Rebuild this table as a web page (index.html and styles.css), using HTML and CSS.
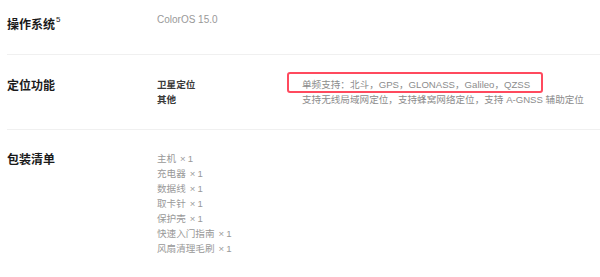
FILE: index.html
```html
<!DOCTYPE html>
<html lang="zh-CN">
<head>
<meta charset="utf-8">
<link rel="stylesheet" href="styles.css">
</head>
<body>
<div class="specs">
  <div class="row row-first">
    <div class="label">操作系统<sup class="sup">5</sup></div>
    <div class="value wide os">ColorOS 15.0</div>
  </div>
  <div class="row">
    <div class="label">定位功能</div>
    <div class="sub">
      <div class="line">卫星定位</div>
      <div class="line">其他</div>
    </div>
    <div class="value">
      <div class="line hl-line">单频支持：北斗，GPS，GLONASS，Galileo，QZSS<span class="highlight"></span></div>
      <div class="line">支持无线局域网定位，支持蜂窝网络定位，支持 A-GNSS 辅助定位</div>
    </div>
  </div>
  <div class="row row-last">
    <div class="label">包装清单</div>
    <div class="value wide list">
      <div class="line">主机 <span class="times">×</span>1</div>
      <div class="line">充电器 <span class="times">×</span>1</div>
      <div class="line">数据线 <span class="times">×</span>1</div>
      <div class="line">取卡针 <span class="times">×</span>1</div>
      <div class="line">保护壳 <span class="times">×</span>1</div>
      <div class="line">快速入门指南 <span class="times">×</span>1</div>
      <div class="line">风扇清理毛刷 <span class="times">×</span>1</div>
    </div>
  </div>
</div>
</body>
</html>
```

FILE: styles.css
```css
html, body {
  margin: 0;
  padding: 0;
  background: #ffffff;
}
body {
  font-family: "Liberation Sans", "Noto Sans CJK SC", sans-serif;
  overflow: hidden;
}
.specs {
  padding-left: 7px;
}
.row {
  display: grid;
  grid-template-columns: 150px 145px 1fr;
  align-items: start;
  padding: 22px 0 22px 0;
  border-bottom: 1px solid #f0f0f0;
}
.row-first {
  padding: 16px 0 20px 0;
}
.row-last {
  padding-top: 21px;
  border-bottom: none;
}
.label {
  font-size: 12px;
  line-height: 18px;
  font-weight: bold;
  color: #1a1a1a;
}
.sup {
  font-size: 8px;
  font-weight: normal;
  vertical-align: top;
  line-height: 10px;
  position: relative;
  top: -1px;
  margin-left: 1px;
}
.sub {
  font-size: 9.6px;
  line-height: 15px;
  color: #3a3a3a;
  font-weight: 600;
}
.value {
  font-size: 9.6px;
  line-height: 15px;
  color: #8c8c8c;
}
.wide {
  grid-column: 2 / 4;
}
.os {
  font-size: 10px;
  margin-top: -4px;
  color: #999999;
}
.list {
  color: #999999;
}
.times {
  display: inline-block;
  width: 8px;
  text-align: center;
  margin-right: 1px;
}
.line {
  white-space: nowrap;
}
.hl-line {
  position: relative;
}
.highlight {
  position: absolute;
  left: -15px;
  top: -5px;
  width: 256px;
  height: 21px;
  box-sizing: border-box;
  border: 2px solid #ff4a5e;
  border-radius: 3px;
}
```
